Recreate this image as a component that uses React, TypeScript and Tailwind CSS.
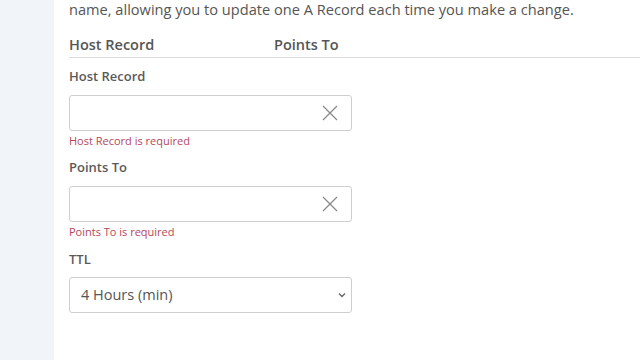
import React from "react";

function XIcon() {
  return (
    <svg width="16" height="16" viewBox="0 0 16 16" fill="none" stroke="#8a8a8a" strokeWidth="1.3">
      <path d="M1 1 L15 15 M15 1 L1 15" />
    </svg>
  );
}

function Field({ label, error }: { label: string; error: string }) {
  return (
    <div className="flex flex-col">
      <div className="text-[13px] font-semibold text-[#5a5a5a] leading-[18px]">{label}</div>
      <div className="mt-[10px] w-[283px] h-[36px] border border-[#cfcfcf] rounded-[3px] bg-white flex items-center justify-end pr-[13px]">
        <XIcon />
      </div>
      <div className="mt-[2px] text-[11px] text-[#b5475a] leading-[16px]">{error}</div>
    </div>
  );
}

export default function App() {
  return (
    <div className="w-[640px] h-[360px] overflow-hidden flex bg-white" style={{ fontFamily: '"Open Sans", sans-serif' }}>
      <div className="w-[54px] shrink-0 bg-[#f1f4f8]" />
      <div className="flex-1 pl-[15px] flex flex-col">
        <div className="text-[14.6px] text-[#555] leading-[20px] mt-[-1px] whitespace-nowrap">
          name, allowing you to update one A Record each time you make a change.
        </div>
        <div className="mt-[16px] flex text-[14.5px] font-semibold text-[#555] leading-[20px] border-b border-[#dcdcdc] pb-[2px]">
          <div className="w-[205px]">Host Record</div>
          <div>Points To</div>
        </div>
        <div className="mt-[9px] flex flex-col gap-[9px]">
          <Field label="Host Record" error="Host Record is required" />
          <Field label="Points To" error="Points To is required" />
          <div className="mt-[1px] flex flex-col">
            <div className="text-[13px] font-semibold text-[#5a5a5a] leading-[18px]">TTL</div>
            <div className="mt-[9px] w-[283px] h-[36px] border border-[#cfcfcf] rounded-[3px] bg-white flex items-center justify-between pl-[11px] pr-[5px]">
              <span className="text-[14.5px] text-[#555]">4 Hours (min)</span>
              <svg width="8" height="6" viewBox="0 0 8 6" fill="none" stroke="#666" strokeWidth="1.4">
                <path d="M1 1.5 L4 4.5 L7 1.5" />
              </svg>
            </div>
          </div>
        </div>
      </div>
    </div>
  );
}
